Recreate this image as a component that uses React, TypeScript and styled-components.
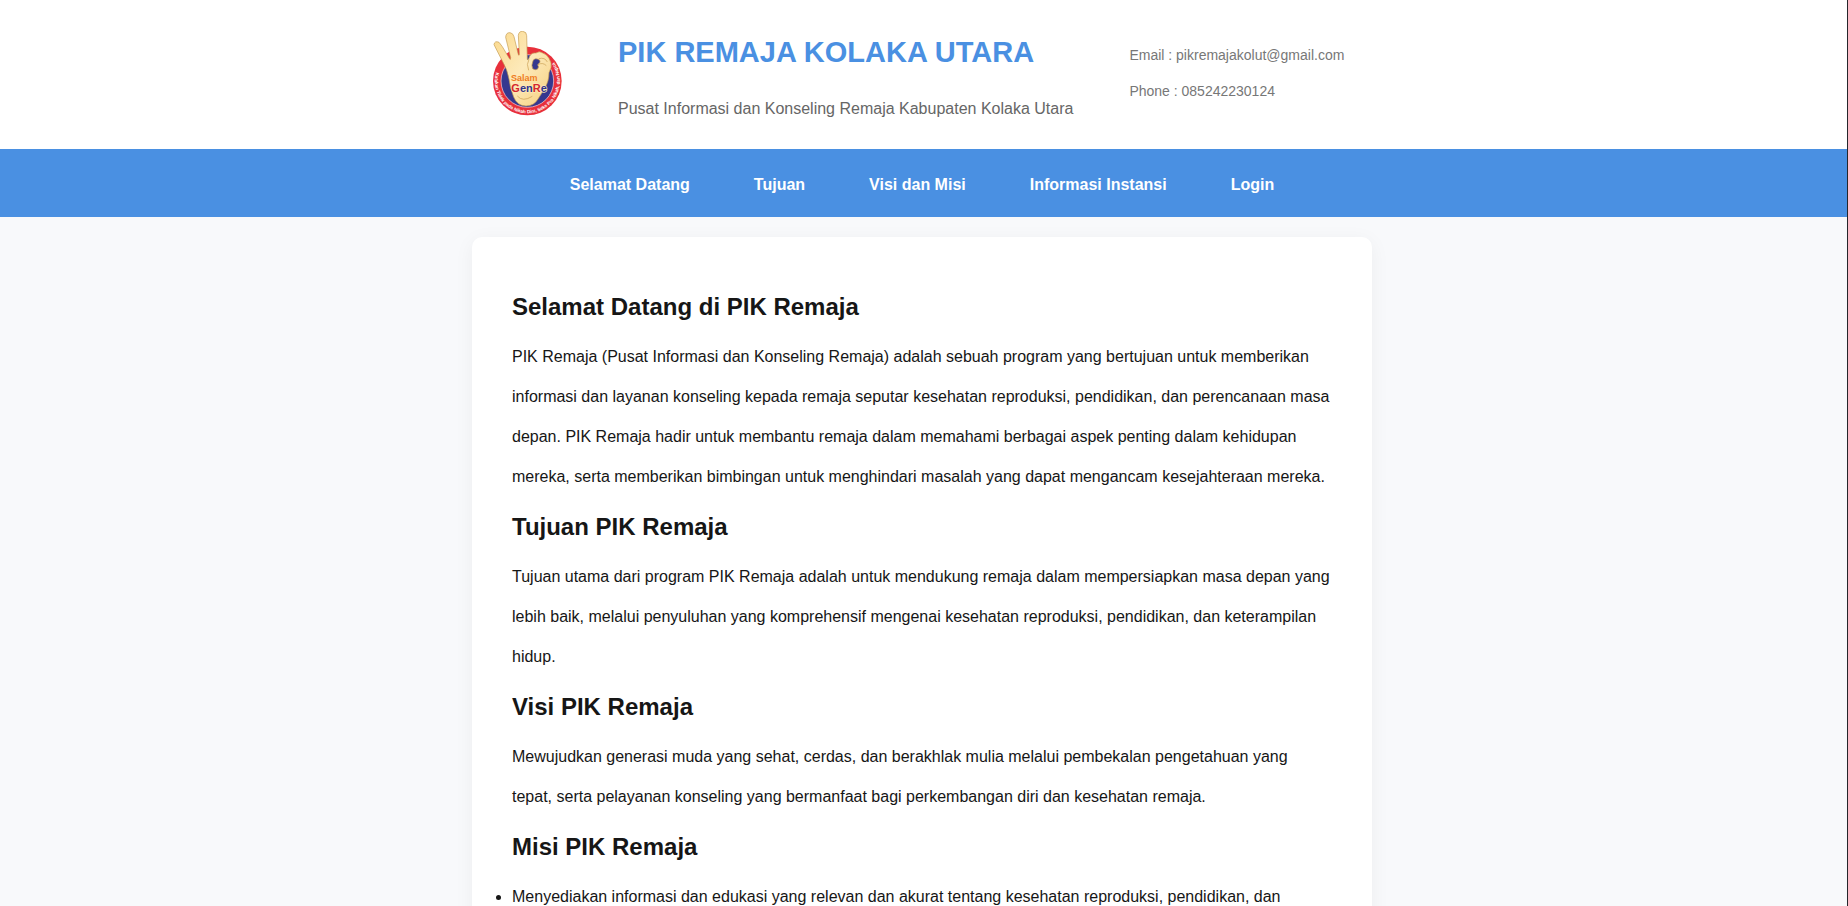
import React from "react";
import styled, { createGlobalStyle } from "styled-components";

const GlobalStyle = createGlobalStyle`
  * { box-sizing: border-box; }
  body {
    margin: 0;
    background: #f8f9fb;
    color: #161616;
    font: 16px/40px "Liberation Sans", Arial, sans-serif;
  }
`;

const Page = styled.div`
  min-height: 100vh;
  border-right: 1px solid #25262b;
`;

const Header = styled.header`
  padding: 17px 3px 20px 0;
  background: #fff;
`;

const HeaderInner = styled.div`
  display: flex;
  align-items: center;
  gap: 56px;
  max-width: 900px;
  margin: 0 auto;
  padding: 0 20px;
`;

const Logo = styled.svg`
  display: block;
  flex: none;
  width: 70px;
  height: 85px;
`;

const Title = styled.h1`
  margin: 0 0 2px;
  color: #4a90e2;
  font-size: 29px;
  line-height: 70px;
`;

const Tagline = styled.p`
  margin: 0;
  color: #666;
`;

const Contact = styled.address`
  color: #777;
  font-size: 14px;
  font-style: normal;
  line-height: 36px;
`;

const ContactLine = styled.p`
  margin: 0;
`;

const Nav = styled.nav`
  padding: 16px 3px 12px 0;
  background: #4a90e2;
`;

const NavList = styled.ul`
  display: flex;
  justify-content: center;
  gap: 64px;
  margin: 0;
  padding: 0;
  list-style: none;
`;

const NavLink = styled.a`
  color: #fff;
  font-weight: 700;
  text-decoration: none;
`;

const Main = styled.main`
  padding: 20px 3px 20px 0;
`;

const Card = styled.div`
  max-width: 900px;
  margin: 0 auto;
  padding: 40px;
  border-radius: 10px;
  background: #fff;
  box-shadow: 0 4px 20px rgba(0, 0, 0, 0.05);
`;

const Heading = styled.h2`
  margin: 0;
  font-size: 24px;
  line-height: 60px;
`;

const Text = styled.p`
  margin: 0;
`;

const Missions = styled.ul`
  margin: 0;
  padding: 0;
`;

const links = [
  { label: "Selamat Datang", href: "#welcome" },
  { label: "Tujuan", href: "#tujuan" },
  { label: "Visi dan Misi", href: "#visi" },
  { label: "Informasi Instansi", href: "#instansi" },
  { label: "Login", href: "#login" },
];

const sections = [
  {
    id: "welcome",
    title: "Selamat Datang di PIK Remaja",
    text: "PIK Remaja (Pusat Informasi dan Konseling Remaja) adalah sebuah program yang bertujuan untuk memberikan informasi dan layanan konseling kepada remaja seputar kesehatan reproduksi, pendidikan, dan perencanaan masa depan. PIK Remaja hadir untuk membantu remaja dalam memahami berbagai aspek penting dalam kehidupan mereka, serta memberikan bimbingan untuk menghindari masalah yang dapat mengancam kesejahteraan mereka.",
  },
  {
    id: "tujuan",
    title: "Tujuan PIK Remaja",
    text: "Tujuan utama dari program PIK Remaja adalah untuk mendukung remaja dalam mempersiapkan masa depan yang lebih baik, melalui penyuluhan yang komprehensif mengenai kesehatan reproduksi, pendidikan, dan keterampilan hidup.",
  },
  {
    id: "visi",
    title: "Visi PIK Remaja",
    text: "Mewujudkan generasi muda yang sehat, cerdas, dan berakhlak mulia melalui pembekalan pengetahuan yang tepat, serta pelayanan konseling yang bermanfaat bagi perkembangan diri dan kesehatan remaja.",
  },
];

const GenReLogo = () => (
  <Logo viewBox="36 33 210 255" role="img" aria-label="Salam GenRe">
    <defs>
      <linearGradient id="skin" x1="0" y1="0" x2="1" y2="1">
        <stop offset="0" stopColor="#fbd98c" />
        <stop offset="0.5" stopColor="#fdeabb" />
        <stop offset="1" stopColor="#f6cf7d" />
      </linearGradient>
      <path id="ring" d="M48 157 A97.5 97.5 0 1 0 170 89" />
    </defs>
    <circle cx="142" cy="183" r="103" fill="#e8303b" />
    <circle cx="142" cy="183" r="79" fill="#35388f" stroke="#f7d9dc" strokeWidth="2" />
    <text fill="#fff" fontFamily="Liberation Sans, Arial, sans-serif" fontSize="14" fontWeight="700">
      <textPath href="#ring">Katakan Tidak pada Nikah Dini, Seks Pra Nikah, dan Napza</textPath>
    </text>
    {/* open palm with three raised fingers */}
    <path
      d="M42 74 Q44 61 57 67 L67 80 L89 117 Q92 121 92 113 L77 52 Q78 37 90 38 Q99 39 102 50 L115 104 Q118 109 118 101 L115 46 Q117 33 128 34 Q140 35 140 47 L142 119 Q146 121 149 109 Q155 97 168 99 Q178 92 188 99 Q201 103 207 115 Q216 129 213 143 L207 158 Q207 185 194 204 Q185 221 174 237 Q162 258 138 258 Q111 257 101 231 Q90 205 87 177 Q82 148 67 123 Z"
      fill="url(#skin)"
      stroke="#c49a4f"
      strokeWidth="2"
      strokeLinejoin="round"
    />
    {/* gap inside the thumb and index finger circle */}
    <path
      d="M158 126 Q161 114 172 117 Q182 119 180 127 L173 134 Q178 140 173 147 Q166 152 158 146 Q153 137 158 126 Z"
      fill="#35388f"
      stroke="#c49a4f"
      strokeWidth="2"
    />
    <path
      d="M176 116 Q195 111 202 126 M174 134 Q188 126 199 137 M147 118 Q138 132 146 151 M112 228 Q128 247 157 229"
      fill="none"
      stroke="#c99d50"
      strokeWidth="2"
    />
    <g fontFamily="Liberation Sans, Arial, sans-serif" fontWeight="700" strokeLinejoin="round" paintOrder="stroke">
      <text x="93" y="182" fill="#ef7d22" stroke="#fde8b5" strokeWidth="2" fontSize="27">Salam</text>
      <text x="94" y="216" fill="#2f348f" stroke="#fde8b5" strokeWidth="4" fontSize="33">
        <tspan fill="#d4252f">G</tspan>en<tspan fill="#d4252f">R</tspan>e
      </text>
    </g>
  </Logo>
);

export default function App() {
  return (
    <Page>
      <GlobalStyle />
      <Header>
        <HeaderInner>
          <GenReLogo />
          <div>
            <Title>PIK REMAJA KOLAKA UTARA</Title>
            <Tagline>Pusat Informasi dan Konseling Remaja Kabupaten Kolaka Utara</Tagline>
          </div>
          <Contact>
            <ContactLine>Email : pikremajakolut@gmail.com</ContactLine>
            <ContactLine>Phone : 085242230124</ContactLine>
          </Contact>
        </HeaderInner>
      </Header>
      <Nav>
        <NavList>
          {links.map((link) => (
            <li key={link.href}>
              <NavLink href={link.href}>{link.label}</NavLink>
            </li>
          ))}
        </NavList>
      </Nav>
      <Main>
        <Card>
          {sections.map((section) => (
            <section key={section.id} id={section.id}>
              <Heading>{section.title}</Heading>
              <Text>{section.text}</Text>
            </section>
          ))}
          <section id="misi">
            <Heading>Misi PIK Remaja</Heading>
            <Missions>
              <li>Menyediakan informasi dan edukasi yang relevan dan akurat tentang kesehatan reproduksi, pendidikan, dan</li>
            </Missions>
          </section>
        </Card>
      </Main>
    </Page>
  );
}
